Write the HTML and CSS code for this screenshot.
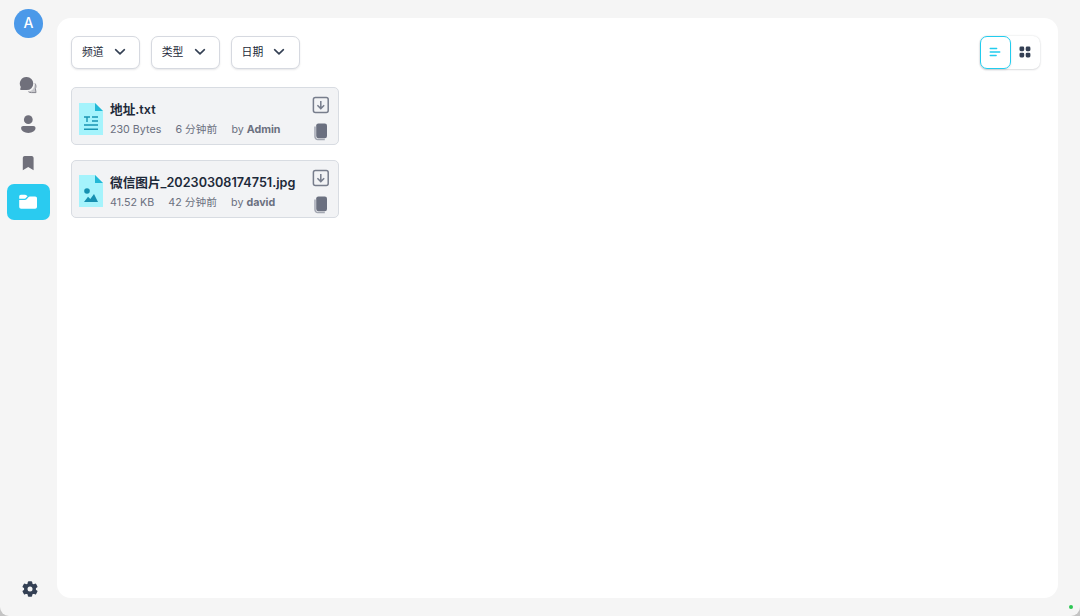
FILE: index.html
```html
<!DOCTYPE html>
<html lang="zh-CN">
<head>
    <meta charset="UTF-8">
    <meta name="viewport" content="width=device-width, initial-scale=1.0">
    <title>Files</title>
    <link rel="stylesheet" href="styles.css">
</head>
<body>
    <!-- Shared icons -->
    <svg class="sprite" width="0" height="0">
        <symbol id="chevron" viewBox="0 0 12 8">
            <path d="M1.6 1.7 6 5.9l4.4-4.2" fill="none" stroke="#344054" stroke-width="1.6" stroke-linecap="round" stroke-linejoin="round"/>
        </symbol>
        <symbol id="download" viewBox="0 0 18 18">
            <rect x="1.4" y="1.6" width="14.8" height="14.8" rx="2" fill="none" stroke="#777d8c" stroke-width="1.5"/>
            <path d="M8.8 5v7.4M5.4 9.2l3.4 3.4 3.4-3.4" fill="none" stroke="#777d8c" stroke-width="1.5"/>
        </symbol>
        <symbol id="copy" viewBox="0 0 18 18">
            <path d="M3 3.4v10.4a2.8 2.8 0 0 0 2.8 2.8h7" fill="none" stroke="#a3a7b2" stroke-width="1.5"/>
            <rect x="4.2" y="0.4" width="10.8" height="14.8" rx="2.2" fill="#6b7080"/>
        </symbol>
    </svg>

    <div class="window">
        <aside class="sidebar">
            <div class="avatar">A</div>
            <nav class="menu">
                <a class="menu-item">
                    <svg width="18" height="18" viewBox="0 0 18 18">
                        <path d="M7.8 1.1a6.4 6.4 0 1 1 0 13H1.9c-.6 0-.8-.5-.7-1l.6-2.1a6.5 6.5 0 0 1 6-9.900z" fill="#70707b"/>
                        <path d="M15.7 7c1.2 1.7 1.4 3.8.6 5.6l.6 4h-4.5c-1.2 0-2.2-.3-3-.9 3.800-.6 6.500-3.900 6.300-8.700z" fill="#c9c9cd"/>
                        <path d="M16.100 7.500c1 1.600 1.100 3.500.3 5.100l.6 4h-4.600c-1.200 0-2.200-.3-3-.9" fill="none" stroke="#85858e"/>
                    </svg>
                </a>
                <a class="menu-item">
                    <svg width="18" height="20" viewBox="0 0 18 20">
                        <circle cx="9.3" cy="5.7" r="4.4" fill="#70707b"/>
                        <path d="M4.3 12h10c1.3 0 2.2.9 2.2 2.1 0 2.9-3.2 4.9-7.2 4.9s-7.2-2-7.2-4.9c0-1.2.9-2.1 2.2-2.1z" fill="#70707b"/>
                    </svg>
                </a>
                <a class="menu-item">
                    <svg width="12" height="16" viewBox="0 0 12 16">
                        <path d="M2.7 1h7c1 0 1.9.8 1.9 1.9v12.3l-5.4-3.1-5.4 3.1V2.9C.8 1.8 1.7 1 2.7 1z" fill="#70707b"/>
                    </svg>
                </a>
                <a class="menu-item active">
                    <svg width="20" height="16" viewBox="0 0 20 16">
                        <path d="M1.2 4.7V2.5c0-1 .7-1.7 1.7-1.7h4.2c.5 0 .9.2 1.3.5l1.2 1-1.7 1.8c-.3.4-.7.6-1.2.6z" fill="#fff"/>
                        <path d="M1.2 6.1h5.6c.7 0 1.3-.3 1.8-.8l2-2.2c.3-.3.7-.5 1.2-.5h5.4c1 0 1.8.8 1.8 1.8v8.4c0 1.2-.8 2-1.9 2h-14c-1.1 0-1.9-.8-1.9-2z" fill="#fff"/>
                    </svg>
                </a>
            </nav>
            <svg class="settings" width="18" height="18" viewBox="0 0 18 18">
                <g fill="#344054">
                    <rect x="6.8" y="1.2" width="4.4" height="15.6" rx="1"/>
                    <rect x="6.8" y="1.2" width="4.4" height="15.6" rx="1" transform="rotate(60 9 9)"/>
                    <rect x="6.8" y="1.2" width="4.4" height="15.6" rx="1" transform="rotate(120 9 9)"/>
                    <circle cx="9" cy="9" r="6"/>
                </g>
                <circle cx="9" cy="9" r="2.5" fill="#f5f5f5"/>
            </svg>
        </aside>

        <main class="main">
            <div class="toolbar">
                <div class="filters">
                    <button class="filter-btn"><span>频道</span><svg width="12" height="8"><use href="#chevron"/></svg></button>
                    <button class="filter-btn"><span>类型</span><svg width="12" height="8"><use href="#chevron"/></svg></button>
                    <button class="filter-btn"><span>日期</span><svg width="12" height="8"><use href="#chevron"/></svg></button>
                </div>
                <div class="view-switch">
                    <div class="view active">
                        <svg width="12" height="10" viewBox="0 0 12 10">
                            <path d="M1.2 1.5h6.5M1.2 5h9.6M1.2 8.5h6" stroke="#22ccee" stroke-width="1.3" stroke-linecap="round"/>
                        </svg>
                    </div>
                    <div class="view">
                        <svg width="12" height="12" viewBox="0 0 12 12" fill="#344054">
                            <rect x=".5" y=".5" width="4.7" height="4.7" rx="1.4"/>
                            <rect x="6.7" y=".5" width="4.7" height="4.7" rx="1.4"/>
                            <rect x=".5" y="6.7" width="4.7" height="4.7" rx="1.4"/>
                            <rect x="6.7" y="6.7" width="4.7" height="4.7" rx="1.4"/>
                        </svg>
                    </div>
                </div>
            </div>

            <div class="file-list">
                <div class="file-card">
                    <svg class="file-icon" width="24" height="32" viewBox="0 0 24 32">
                        <path d="M0 0h16l8 8v24H0z" fill="#a5f3fc"/>
                        <path d="M16 0l8 8h-8z" fill="#22b8d6"/>
                        <path d="M5 14h6M8 14v5M13 14h6M13 18h6M5 22h14M5 26.3h14" fill="none" stroke="#1995b3" stroke-width="1.4"/>
                    </svg>
                    <div class="file-info">
                        <div class="file-name">地址.txt</div>
                        <div class="file-meta">
                            <span>230 Bytes</span>
                            <span>6 分钟前</span>
                            <span>by <b>Admin</b></span>
                        </div>
                    </div>
                    <div class="file-actions">
                        <svg width="18" height="18"><use href="#download"/></svg>
                        <svg width="18" height="18"><use href="#copy"/></svg>
                    </div>
                </div>
                <div class="file-card">
                    <svg class="file-icon" width="24" height="32" viewBox="0 0 24 32">
                        <path d="M0 0h16l8 8v24H0z" fill="#a5f3fc"/>
                        <path d="M16 0l8 8h-8z" fill="#22b8d6"/>
                        <circle cx="8" cy="16" r="2.8" fill="#1690b1"/>
                        <path d="M5 27l4-5.2 2.3 2.2 3.7-5 4 8z" fill="#1690b1"/>
                    </svg>
                    <div class="file-info">
                        <div class="file-name">微信图片_20230308174751.jpg</div>
                        <div class="file-meta">
                            <span>41.52 KB</span>
                            <span>42 分钟前</span>
                            <span>by <b>david</b></span>
                        </div>
                    </div>
                    <div class="file-actions">
                        <svg width="18" height="18"><use href="#download"/></svg>
                        <svg width="18" height="18"><use href="#copy"/></svg>
                    </div>
                </div>
            </div>
        </main>
        <span class="status-dot"></span>
    </div>
</body>
</html>
```

FILE: styles.css
```css
* {
    margin: 0;
    padding: 0;
    box-sizing: border-box;
}

body {
    font-family: Inter, "Noto Sans CJK SC", sans-serif;
    background-color: #c4c4c4;
    color: #1d2939;
}

svg {
    display: block;
    flex-shrink: 0;
}

.sprite {
    position: absolute;
}

.window {
    position: relative;
    display: flex;
    height: 616px;
    padding-right: 22px;
    background-color: #f5f5f5;
    border-radius: 0 0 9px 9px;
}

/* Sidebar */
.sidebar {
    display: flex;
    flex-direction: column;
    align-items: center;
    width: 57px;
    padding: 9px 0 18px;
}

.avatar {
    width: 28.5px;
    height: 28.5px;
    border-radius: 50%;
    background-color: #4b99e9;
    color: #fff;
    font-size: 14px;
    font-weight: 500;
    line-height: 28px;
    text-align: center;
}

.menu {
    display: flex;
    flex-direction: column;
    gap: 4px;
    width: 43px;
    margin: 29.5px 1px 0 0;
}

.menu-item {
    display: flex;
    align-items: center;
    justify-content: center;
    height: 35px;
    border-radius: 7px;
}

.menu-item.active {
    height: 36px;
    background-color: #2acbf0;
}

.settings {
    margin-top: auto;
    margin-left: 3px;
}

/* Content */
.main {
    flex: 1;
    margin: 17.5px 0 18px;
    padding: 18px 18px 0 14px;
    background-color: #fff;
    border-radius: 14px;
}

.toolbar {
    display: flex;
    justify-content: space-between;
    height: 33.5px;
}

.filters {
    display: flex;
    gap: 10.5px;
}

.filter-btn {
    display: flex;
    align-items: center;
    justify-content: space-between;
    width: 69.3px;
    padding: 0 13.5px 0 10px;
    border: 1px solid #d6d9e0;
    border-radius: 7px;
    background-color: #fff;
    box-shadow: 0 1px 2px rgba(16, 24, 40, 0.1);
    color: #1d2939;
    font-family: inherit;
    font-size: 10.8px;
    font-weight: 400;
    line-height: 16px;
}

.filter-btn span {
    padding-top: 2px;
}

.view-switch {
    display: flex;
    width: 60px;
    border-radius: 7px;
    box-shadow: 0 0 2px rgba(16, 24, 40, 0.15), 0 1px 2px rgba(16, 24, 40, 0.1);
}

.view {
    display: flex;
    flex: 1;
    align-items: center;
    justify-content: center;
    padding: 0 1px 1px 0;
}

.view.active {
    border: 1px solid #22ccee;
    border-radius: 7px;
    box-shadow: 0 1px 2px rgba(16, 24, 40, 0.12);
}

.file-list {
    display: flex;
    flex-direction: column;
    gap: 14.5px;
    width: 268.3px;
    margin-top: 18px;
}

.file-card {
    display: flex;
    align-items: center;
    height: 58.3px;
    padding: 0 8px 0 7px;
    border: 1px solid #d8dce2;
    border-radius: 5px;
    background-color: #f2f3f5;
}

.file-icon {
    margin-top: 5px;
}

.file-info {
    flex: 1;
    margin: 7.5px 0 0 7px;
    white-space: nowrap;
}

.file-name {
    font-size: 12.65px;
    font-weight: 600;
    line-height: 20px;
}

.file-meta {
    display: flex;
    gap: 14.2px;
    color: #6b7080;
    font-size: 10.7px;
    line-height: 20px;
}

.file-meta b {
    font-weight: 700;
}

.file-actions {
    display: flex;
    flex-direction: column;
    gap: 8.5px;
    margin-top: 5px;
}

.status-dot {
    position: absolute;
    right: 7px;
    bottom: 7px;
    width: 4px;
    height: 4px;
    border-radius: 50%;
    background-color: #2dc653;
}
```
